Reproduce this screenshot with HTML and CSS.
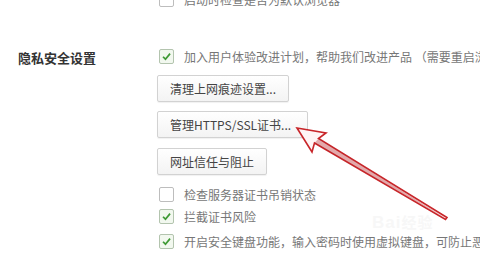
FILE: index.html
```html
<!DOCTYPE html>
<html lang="zh-CN">
<head>
<meta charset="utf-8">
<link rel="stylesheet" href="styles.css">
</head>
<body>
<div class="page">
  <div class="section section-top">
    <div class="label"></div>
    <div class="content">
      <div class="check-row"><span class="box"></span><span class="text">启动时检查是否为默认浏览器</span></div>
    </div>
  </div>
  <div class="section section-privacy">
    <div class="label">隐私安全设置</div>
    <div class="content">
      <div class="check-row"><span class="box checked"><svg viewBox="0 0 15 15"><path d="M3.5 7.8 L6.3 10.6 L11.6 4.2" fill="none" stroke="#3f9a35" stroke-width="2"/></svg></span><span class="text">加入用户体验改进计划，帮助我们改进产品 （需要重启浏览器生效）</span></div>
      <button class="btn b1">清理上网痕迹设置...</button>
      <button class="btn b2">管理HTTPS/SSL证书...</button>
      <button class="btn b3">网址信任与阻止</button>
      <div class="check-row r1"><span class="box"></span><span class="text">检查服务器证书吊销状态</span></div>
      <div class="check-row r2"><span class="box checked"><svg viewBox="0 0 15 15"><path d="M3.5 7.8 L6.3 10.6 L11.6 4.2" fill="none" stroke="#3f9a35" stroke-width="2"/></svg></span><span class="text">拦截证书风险</span></div>
      <div class="check-row r3"><span class="box checked"><svg viewBox="0 0 15 15"><path d="M3.5 7.8 L6.3 10.6 L11.6 4.2" fill="none" stroke="#3f9a35" stroke-width="2"/></svg></span><span class="text">开启安全键盘功能，输入密码时使用虚拟键盘，可防止恶意程序窃取</span></div>
    </div>
  </div>
  <div class="watermark">Bai<span class="wm-cn">经验</span></div>
  <svg class="arrow" width="480" height="257" viewBox="0 0 480 257">
    <polygon points="297,128 326,133 318.5,138.5 447,217.5 445.5,219.5 314.5,143 312,152" fill="#fff5f5" stroke="#c8262a" stroke-width="1.6" stroke-linejoin="miter"/>
    <path d="M318.5,138.5 L446,218.5 L314.5,143" fill="#b01e22" opacity="0.35"/>
  </svg>
</div>
</body>
</html>
```
FILE: styles.css
```css
html, body {
  margin: 0;
  padding: 0;
  background: #fff;
}
body {
  font-family: "Noto Sans CJK SC", "Noto Sans", sans-serif;
  font-size: 12px;
  color: #777;
  width: 480px;
  height: 257px;
  overflow: hidden;
}
.page {
  position: relative;
  width: 480px;
  height: 257px;
  overflow: hidden;
}
.section {
  display: flex;
  padding-left: 18px;
}
.label {
  width: 139px;
  flex: none;
  font-size: 13px;
  font-weight: bold;
  color: #333;
  line-height: 16px;
  padding-top: 1px;
}
.content {
  display: flex;
  flex-direction: column;
  align-items: flex-start;
}
.section-top {
  margin-top: -8px;
}
.section-privacy {
  margin-top: 42px;
}
.check-row {
  display: flex;
  align-items: center;
  height: 15px;
  padding-left: 2px;
  white-space: nowrap;
}
.box {
  width: 13px;
  height: 13px;
  border: 1px solid #bdbdbd;
  border-radius: 2px;
  background: #fff;
  flex: none;
  display: flex;
}
.box.checked {
  background: #f2f8ef;
  border-color: #b3c4ae;
}
.box svg {
  width: 13px;
  height: 13px;
}
.text {
  margin-left: 10px;
  line-height: 15px;
}
.btn {
  font-family: "Noto Sans CJK SC", "Noto Sans", sans-serif;
  font-size: 12px;
  color: #444;
  height: 27px;
  padding: 0 12px;
  border: 1px solid #d2d2d2;
  border-radius: 2px;
  background: linear-gradient(#ffffff, #f3f3f3);
  box-shadow: 0 1px 1px rgba(0,0,0,0.06);
  white-space: nowrap;
  line-height: 25px;
}
.b1 { margin-top: 11px; }
.b2 { margin-top: 9px; padding-right: 16px; }
.b3 { margin-top: 10px; }
.r1 { margin-top: 12px; }
.r2 { margin-top: 7px; }
.r3 { margin-top: 10px; }
.watermark {
  position: absolute;
  left: 372px;
  top: 211px;
  font-family: "Liberation Sans", sans-serif;
  font-size: 17px;
  font-weight: bold;
  color: #f7f7f7;
  letter-spacing: 1px;
}
.wm-cn {
  font-family: "Noto Sans CJK SC", sans-serif;
  font-size: 15px;
}
.arrow {
  position: absolute;
  left: 0;
  top: 0;
}
```
